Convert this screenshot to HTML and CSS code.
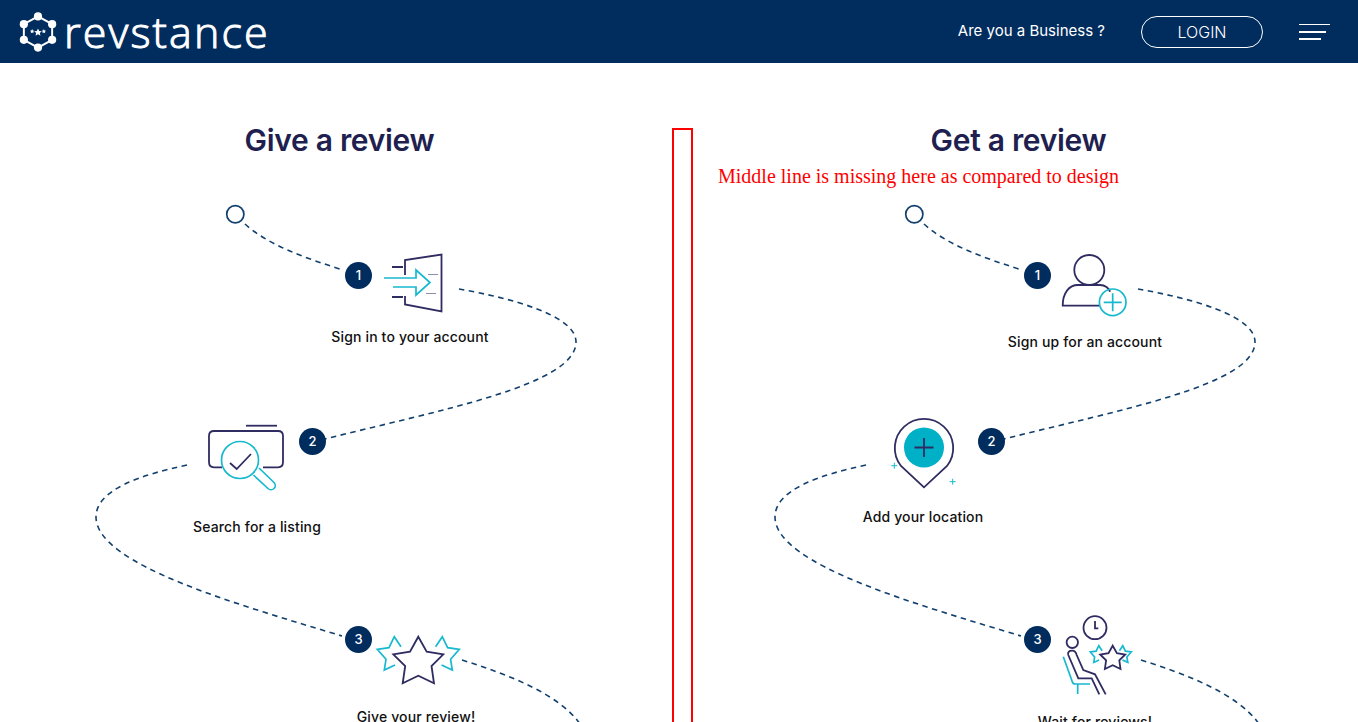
FILE: index.html
```html
<!DOCTYPE html>
<html lang="en">
<head>
  <meta charset="UTF-8" />
  <meta name="viewport" content="width=device-width, initial-scale=1" />
  <title>Revstance - How it works</title>
  <link rel="stylesheet" href="styles.css">
</head>
<body>

  <header class="topbar">
    <a class="logo" href="#">
      <svg class="logo-mark" width="40" height="42" viewBox="16 11 41 42">
        <polygon class="logo-hex" points="36.5,16 51,24 51,40 36.5,48 22,40 22,24" />
        <circle cx="36.5" cy="16" r="4.2" />
        <circle cx="51" cy="24" r="4.2" />
        <circle cx="51" cy="40" r="4.2" />
        <circle cx="36.5" cy="48" r="4.2" />
        <circle cx="22" cy="40" r="4.2" />
        <circle cx="22" cy="24" r="4.2" />
        <polygon points="36.5,28.5 37.7,31 40.4,31.3 38.4,33.1 39,35.8 36.5,34.4 34,35.8 34.6,33.1 32.6,31.3 35.3,31" />
        <polygon points="30.5,29 31.2,30.5 32.8,30.7 31.6,31.8 31.9,33.4 30.5,32.6 29.1,33.4 29.4,31.8 28.2,30.7 29.8,30.5" />
        <polygon points="42.5,29 43.2,30.5 44.8,30.7 43.6,31.8 43.9,33.4 42.5,32.6 41.1,33.4 41.4,31.8 40.2,30.7 41.8,30.5" />
      </svg>
      <span class="logo-text">revstance</span>
    </a>
    <nav class="topnav">
      <a class="business" href="#">Are you a Business ?</a>
      <a class="login" href="#">LOGIN</a>
      <button class="burger" type="button" aria-label="Menu">
        <span class="burger-a"></span>
        <span class="burger-b"></span>
        <span class="burger-c"></span>
      </button>
    </nav>
  </header>

  <main class="how">
    <section class="side">
      <h2>Give a review</h2>
      <div class="flow">
        <svg class="flow-art" viewBox="0 195 679 560" width="679" height="560">
          <circle class="start" cx="235.3" cy="214.2" r="8.6" />
          <path class="trail" d="M245 224C268 245 305 258 343 270" />
          <path class="trail" d="M459 289C510 298 576 315 576 342C576 385 440 410 325 439" />
          <path class="trail" d="M187 465C140 475 96 490 96 517C96 565 240 605 342 636" />
          <path class="trail" d="M462 660C510 675 560 695 580 724" />

          <!-- sign in -->
          <path class="ink" d="M405 275V260L441.5 254.5V311.5L405 304.5V296" />
          <path class="ink" d="M392 267H403M392 297H403" />
          <path class="ink faint" d="M428 274.5H438M426 293.5H436" />
          <path class="teal" d="M384 278H416V270L430 282.5L416 295V287H393" />

          <!-- search -->
          <path class="ink" d="M246 425.7H277" />
          <path class="ink" d="M222 467.3H214Q209 467.3 209 462V436Q209 431 214 431H278Q283 431 283 436V462Q283 467.3 278 467.3H263" />
          <path class="ink" d="M230 463L236.7 469L251 454" />
          <circle class="teal" cx="240" cy="460" r="18.5" />
          <path class="teal" d="M253.5 475L268 488.5A4.2 4.2 0 0 0 274 482.5L259 468" />

          <!-- stars -->
          <polygon class="ink" points="418.3,636.7 426.7,651.7 443.3,654.3 431.5,666 434,683.3 418.3,675.7 402.7,683.3 405.2,666 393.3,654.3 410,651.7" />
          <path class="teal" d="M401 646.7L394.3 636.7L389 647.7L377.3 649.3L386 659.3L384.3 670L395 665" />
          <path class="teal" d="M435.6 646.7L442.3 636.7L447.6 647.7L459.3 649.3L450.6 659.3L452.3 670L441.6 665" />
        </svg>
        <span class="badge badge-1">1</span>
        <span class="badge badge-2">2</span>
        <span class="badge badge-3">3</span>
        <p class="label label-signin">Sign in to your account</p>
        <p class="label label-search">Search for a listing</p>
        <p class="label label-give">Give your review!</p>
      </div>
    </section>

    <section class="side">
      <h2>Get a review</h2>
      <div class="flow">
        <svg class="flow-art" viewBox="0 195 679 560" width="679" height="560">
          <circle class="start" cx="235.3" cy="214.2" r="8.6" />
          <path class="trail" d="M245 224C268 245 305 258 343 270" />
          <path class="trail" d="M459 289C510 298 576 315 576 342C576 385 440 410 325 439" />
          <path class="trail" d="M187 465C140 475 96 490 96 517C96 565 240 605 342 636" />
          <path class="trail" d="M462 660C510 675 560 695 580 724" />

          <!-- sign up -->
          <circle class="ink" cx="410.3" cy="270" r="15" />
          <path class="ink" d="M421 305.7H383.7C383.7 293 390 285 399 285H421C426 285 430 288 431 291.7" />
          <circle class="teal" cx="433.7" cy="302.3" r="13.3" />
          <path class="teal" d="M433.7 293.3V311.3M424.7 302.3H442.7" />

          <!-- location -->
          <path class="ink" d="M245 487.3L222 466A29.2 29.2 0 1 1 268 466Z" />
          <circle class="teal-fill" cx="245" cy="447.5" r="20" />
          <path class="ink" d="M245 438V457M235.5 447.5H254.5" />
          <path class="teal thin" d="M215.3 462.7V468.7M212.3 465.7H218.3M273.7 478.7V484.7M270.7 481.7H276.7" />

          <!-- waiting -->
          <circle class="ink" cx="416" cy="627.7" r="11.5" />
          <path class="ink" d="M416 621V628.3H419.3" />
          <circle class="ink" cx="393.3" cy="642.3" r="5.7" />
          <path class="ink" d="M420.3 694.3L412.7 678.3H399.3L389.3 655Q388 650.7 393.3 650.7Q396.5 650.7 397.7 655L404.3 670L416 674.3L426.7 694.3" />
          <path class="teal" d="M384.3 656.7L392.7 680Q393.5 684 396 684H411M398.7 684V694" />
          <polygon class="ink" points="433.7,645.7 437.9,653.2 446.2,654.5 440.3,660.4 441.5,669 433.7,665.2 425.9,669 427.1,660.4 421.2,654.5 429.5,653.2" />
          <path class="teal" d="M423.1 650.7L419.8 645.7L417.1 651.2L411.3 652L415.6 657L414.8 662.4L420.1 660" />
          <path class="teal" d="M440.4 650.7L443.8 645.7L446.4 651.2L452.3 652L447.9 657L448.8 662.4L443.4 660" />
        </svg>
        <span class="badge badge-1">1</span>
        <span class="badge badge-2">2</span>
        <span class="badge badge-3">3</span>
        <p class="label label-signup">Sign up for an account</p>
        <p class="label label-location">Add your location</p>
        <p class="label label-wait">Wait for reviews!</p>
      </div>
    </section>

    <div class="redbox"></div>
    <p class="note">Middle line is missing here as compared to design</p>
  </main>

</body>
</html>
```

FILE: styles.css
```css
html, body {
  height: 100%;
  overflow: hidden;
}
body {
  margin: 0;
  background-color: #fff;
  font-family: Inter, "Open Sans", sans-serif;
  color: #201f50;
}
a {
  color: inherit;
  text-decoration: none;
}

.topbar {
  height: 63px;
  display: flex;
  align-items: center;
  justify-content: space-between;
  padding: 0 28px 0 18px;
  background-color: #012c5e;
  color: #fff;
}
.logo {
  display: flex;
  align-items: center;
  gap: 6px;
}
.logo-mark {
  fill: #fff;
}
.logo-hex {
  fill: none;
  stroke: #fff;
  stroke-width: 2;
}
.logo-text {
  font-family: "Open Sans", sans-serif;
  font-weight: 300;
  font-size: 43px;
  line-height: 50px;
  letter-spacing: 2.1px;
  -webkit-text-stroke: 1px #fff;
}
.topnav {
  display: flex;
  align-items: center;
}
.business {
  font-size: 15px;
  font-weight: 400;
  margin: 0 36px 2px 0;
}
.login {
  width: 120px;
  height: 30px;
  display: flex;
  align-items: center;
  justify-content: center;
  border: 1px solid #fff;
  border-radius: 16px;
  font-size: 16px;
  font-weight: 300;
  margin-right: 36px;
}
.burger {
  width: 31px;
  padding: 0;
  border: none;
  background: none;
  display: flex;
  flex-direction: column;
  align-items: flex-start;
}
.burger span {
  display: block;
  background-color: #fff;
}
.burger-a {
  width: 31px;
  height: 1px;
  margin-bottom: 6px;
}
.burger-b {
  width: 27px;
  height: 2px;
  margin-bottom: 5px;
}
.burger-c {
  width: 22px;
  height: 2px;
}

.how {
  position: relative;
  display: grid;
  grid-template-columns: 1fr 1fr;
}
.side h2 {
  margin: 57px 0 35px;
  font-size: 30px;
  line-height: 40px;
  font-weight: 600;
  letter-spacing: -0.3px;
  text-align: center;
}
.flow {
  position: relative;
  height: 527px;
}
.flow-art {
  position: absolute;
  left: 0;
  top: 0;
  fill: none;
}
.start {
  stroke: #12406e;
  stroke-width: 1.7;
}
.trail {
  stroke: #12406e;
  stroke-width: 1.6;
  stroke-dasharray: 5.5 4.5;
}
.ink {
  stroke: #2f2c62;
  stroke-width: 1.8;
}
.faint {
  stroke: #8f8dab;
  stroke-width: 1;
}
.teal {
  stroke: #17b9cf;
  stroke-width: 1.7;
}
.thin {
  stroke-width: 1;
}
.teal-fill {
  fill: #00b0c6;
}

.badge {
  position: absolute;
  width: 27px;
  height: 27px;
  border-radius: 50%;
  background-color: #012c5e;
  color: #fff;
  font-size: 13px;
  font-weight: 500;
  line-height: 27px;
  text-align: center;
}
.badge-1 { left: 345px; top: 67px; }
.badge-2 { left: 299px; top: 233px; }
.badge-3 { left: 345px; top: 431px; }

.label {
  position: absolute;
  width: 200px;
  margin: 0;
  font-size: 14px;
  font-weight: 500;
  line-height: 20px;
  letter-spacing: 0.15px;
  color: #111;
  text-align: center;
}
.label-signin { left: 310px; top: 132px; }
.label-search { left: 157px; top: 322px; }
.label-give { left: 316px; top: 512px; }
.label-signup { left: 306px; top: 137px; }
.label-location { left: 144px; top: 312px; }
.label-wait { left: 316px; top: 517px; }

.redbox {
  position: absolute;
  left: 672px;
  top: 65px;
  width: 17px;
  height: 700px;
  border: 2px solid #f00;
}
.note {
  position: absolute;
  left: 718px;
  top: 100px;
  margin: 0;
  font-family: "Liberation Serif", serif;
  font-size: 20px;
  line-height: 26px;
  color: #f00;
}
```
